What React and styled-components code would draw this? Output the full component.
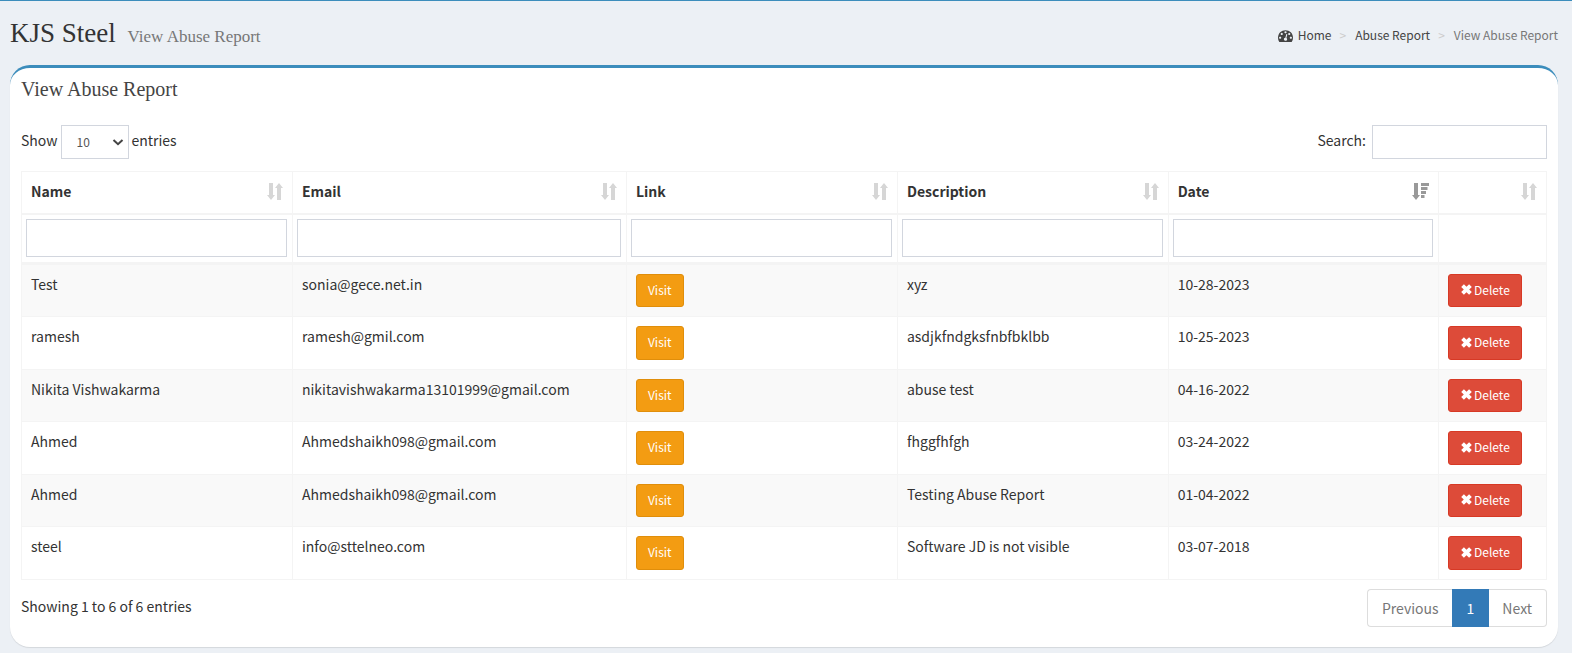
import React from "react";
import styled, { createGlobalStyle } from "styled-components";

const GlobalStyle = createGlobalStyle`
  *, *::before, *::after { box-sizing: border-box; }
  body {
    margin: 0;
    background: #ecf0f5;
    color: #333;
    font: 14px/20px "Source Sans Pro", "Noto Sans CJK SC", sans-serif;
  }
  input, select, button { font: inherit; color: inherit; }
`;

const Page = styled.div`
  border-top: 1px solid #3c8dbc;
  padding-bottom: 6px;
`;

const PageHeader = styled.header`
  display: flex;
  justify-content: space-between;
  align-items: flex-start;
  height: 64px;
  padding: 16px 14px 0 10px;
`;

const PageTitle = styled.h1`
  margin: 0;
  font: 27px/32px "Liberation Serif", serif;
`;

const Subtitle = styled.small`
  padding-left: 5px;
  font-size: 17px;
  color: #777;
`;

const Breadcrumb = styled.ol`
  display: flex;
  margin: 0;
  padding: 8px 0 0;
  list-style: none;
  font-size: 12px;
  line-height: 20px;
`;

const Crumb = styled.li`
  color: #777;
  & + &::before {
    content: ">";
    padding: 0 9px 0 8px;
    color: #ccc;
  }
`;

const CrumbLink = styled.a`
  display: inline-flex;
  align-items: center;
  gap: 5px;
  color: #444;
  text-decoration: none;
`;

const Card = styled.main`
  margin: 0 14px 0 10px;
  padding: 10px 11px 20px;
  border-top: 3px solid #3c8dbc;
  border-radius: 20px;
  background: #fff;
  box-shadow: 0 1px 1px rgba(0, 0, 0, 0.1);
`;

const CardTitle = styled.h2`
  margin: 0 0 25px;
  font: 20px/22px "Liberation Serif", serif;
  color: #444;
`;

const Toolbar = styled.div`
  display: flex;
  justify-content: space-between;
  margin-bottom: 12px;
`;

const Control = styled.label`
  display: flex;
  align-items: flex-start;
  gap: ${(p) => p.$gap}px;
  line-height: 30px;
`;

const SelectWrap = styled.span`
  display: grid;
  align-items: center;
  & > * { grid-area: 1 / 1; }
  & > svg { justify-self: end; margin-right: 5px; pointer-events: none; }
`;

const Select = styled.select`
  appearance: none;
  width: 68px;
  height: 34px;
  padding: 0 15px;
  border: 1px solid #d2d6de;
  border-radius: 0;
  background: #fff;
  font-size: 12px;
  color: #555;
`;

const TextInput = styled.input`
  width: ${(p) => p.$width};
  height: ${(p) => p.$height}px;
  display: block;
  padding: 0 12px;
  border: 1px solid #d2d6de;
  border-radius: 0;
  background: #fff;
`;

const Table = styled.table`
  width: 100%;
  table-layout: fixed;
  border-collapse: separate;
  border-spacing: 0;
  border-top: 1px solid #f4f4f4;
  border-left: 1px solid #f4f4f4;
`;

const Col = styled.col`
  width: ${(p) => p.$width};
`;

const HeadCell = styled.th`
  height: 43px;
  padding: 9px 9px 0;
  border-right: 1px solid #f4f4f4;
  border-bottom: 2px solid #f4f4f4;
  text-align: left;
  vertical-align: top;
`;

const HeadContent = styled.div`
  display: flex;
  justify-content: space-between;
  align-items: center;
  height: 20px;
`;

const FilterCell = styled.td`
  height: 50px;
  padding: 4px 5px 5px 4px;
  border-right: 1px solid #f4f4f4;
  border-bottom: 3px solid #f4f4f4;
  vertical-align: top;
`;

const Row = styled.tr`
  height: 52px;
  background: #f9f9f9;
  &:nth-child(even) { height: 53px; background: #fff; }
`;

const Cell = styled.td`
  padding: 9px;
  border-right: 1px solid #f4f4f4;
  border-bottom: 1px solid #f4f4f4;
  vertical-align: top;
  white-space: nowrap;
`;

const ActionButton = styled.button`
  display: flex;
  align-items: center;
  gap: 1px;
  height: 33px;
  padding: 0 11px 2px;
  border: 1px solid ${(p) => p.$edge};
  border-radius: 3px;
  background: ${(p) => p.$fill};
  color: #fff;
  font-size: 12px;
  line-height: 20px;
  ${Row}:nth-child(even) & { height: 34px; }
`;

const Footer = styled.footer`
  display: flex;
  justify-content: space-between;
  align-items: flex-start;
  padding-top: 9px;
`;

const Info = styled.p`
  margin: 0;
  padding-top: 7px;
`;

const Pagination = styled.nav`
  display: flex;
`;

const PageButton = styled.button`
  height: 38px;
  padding: 0 14px;
  border: 1px solid ${(p) => (p.$active ? "#337ab7" : "#ddd")};
  background: ${(p) => (p.$active ? "#337ab7" : "#fff")};
  color: ${(p) => (p.$active ? "#fff" : "#777")};
  &:first-child { padding-right: 13px; border-right: 0; border-radius: 4px 0 0 4px; }
  &:last-child { padding-left: 13px; border-left: 0; border-radius: 0 4px 4px 0; }
`;

const DashboardIcon = () => (
  <svg width="15" height="15" viewBox="0 0 1792 1792" fill="currentColor" aria-hidden="true">
    <path d="M384 1152q0-53-37.5-90.5t-90.5-37.5-90.5 37.5-37.5 90.5 37.5 90.5 90.5 37.5 90.5-37.5 37.5-90.5zm192-448q0-53-37.5-90.5t-90.5-37.5-90.5 37.5-37.5 90.5 37.5 90.5 90.5 37.5 90.5-37.5 37.5-90.5zm428 481l101-382q6-26-7.5-48.5t-38.5-29.5-48 6.5-30 39.5l-101 382q-60 5-107 43.5t-63 98.5q-20 77 20 146t117 89 146-20 89-117q16-60-6-117t-72-91zm660-33q0-53-37.5-90.5t-90.5-37.5-90.5 37.5-37.5 90.5 37.5 90.5 90.5 37.5 90.5-37.5 37.5-90.5zm-640-640q0-53-37.5-90.5t-90.5-37.5-90.5 37.5-37.5 90.5 37.5 90.5 90.5 37.5 90.5-37.5 37.5-90.5zm448 192q0-53-37.5-90.5t-90.5-37.5-90.5 37.5-37.5 90.5 37.5 90.5 90.5 37.5 90.5-37.5 37.5-90.5zm320 448q0 261-141 483-19 29-54 29h-1402q-35 0-54-29-141-221-141-483 0-182 71-348t191-286 286-191 348-71 348 71 286 191 191 286 71 348z" />
  </svg>
);

const RemoveIcon = () => (
  <svg width="13" height="13" viewBox="0 0 13 13" fill="currentColor" aria-hidden="true">
    <path d="M3.9 1.2 6.5 3.8 9.1 1.2 11.8 3.9 9.2 6.5 11.8 9.1 9.1 11.8 6.5 9.2 3.9 11.8 1.2 9.1 3.8 6.5 1.2 3.9z" />
  </svg>
);

const ChevronIcon = () => (
  <svg width="12" height="12" viewBox="0 0 12 12" fill="none" stroke="#444" strokeWidth="2" aria-hidden="true">
    <path d="M1.5 4 6 8.2 10.5 4" />
  </svg>
);

const SortIcon = () => (
  <svg width="16" height="17" viewBox="0 0 16 17" fill="#d6d6d6" aria-hidden="true">
    <path d="M2 0h4v12h2L4 17 0 12h2z" />
    <path d="M10 17h4V5h2L12 0 8 5h2z" />
  </svg>
);

const SortDescIcon = () => (
  <svg width="17" height="17" viewBox="0 0 17 17" fill="#999" aria-hidden="true">
    <path d="M2 0h4v12h2L4 17 0 12h2z" />
    <path d="M9 0h8v3H9zM9 4h6.5v3H9zM9 8h5v3H9zM9 12h3.5v3H9z" />
  </svg>
);

const columns = [
  { label: "Name", width: "17.77%" },
  { label: "Email", width: "21.9%" },
  { label: "Link", width: "17.77%" },
  { label: "Description", width: "17.75%" },
  { label: "Date", width: "17.73%", sorted: true },
  { label: "", width: "7.08%" },
];

const reports = [
  ["Test", "sonia@gece.net.in", "xyz", "10-28-2023"],
  ["ramesh", "ramesh@gmil.com", "asdjkfndgksfnbfbklbb", "10-25-2023"],
  ["Nikita Vishwakarma", "nikitavishwakarma13101999@gmail.com", "abuse test", "04-16-2022"],
  ["Ahmed", "Ahmedshaikh098@gmail.com", "fhggfhfgh", "03-24-2022"],
  ["Ahmed", "Ahmedshaikh098@gmail.com", "Testing Abuse Report", "01-04-2022"],
  ["steel", "info@sttelneo.com", "Software JD is not visible", "03-07-2018"],
];

export default function App() {
  return (
    <Page>
      <GlobalStyle />
      <PageHeader>
        <PageTitle>
          KJS Steel <Subtitle>View Abuse Report</Subtitle>
        </PageTitle>
        <Breadcrumb>
          <Crumb><CrumbLink href="#home"><DashboardIcon />Home</CrumbLink></Crumb>
          <Crumb><CrumbLink href="#abuse-report">Abuse Report</CrumbLink></Crumb>
          <Crumb>View Abuse Report</Crumb>
        </Breadcrumb>
      </PageHeader>
      <Card>
        <CardTitle>View Abuse Report</CardTitle>
        <Toolbar>
          <Control $gap={3}>
            Show
            <SelectWrap>
              <Select defaultValue="10">
                <option>10</option>
                <option>25</option>
                <option>50</option>
                <option>100</option>
              </Select>
              <ChevronIcon />
            </SelectWrap>
            entries
          </Control>
          <Control $gap={6}>
            Search:
            <TextInput type="search" $width="175px" $height={34} />
          </Control>
        </Toolbar>
        <Table>
          <colgroup>
            {columns.map((c) => <Col key={c.label} $width={c.width} />)}
          </colgroup>
          <thead>
            <tr>
              {columns.map((c) => (
                <HeadCell key={c.label} scope="col">
                  <HeadContent>
                    <span>{c.label}</span>
                    {c.sorted ? <SortDescIcon /> : <SortIcon />}
                  </HeadContent>
                </HeadCell>
              ))}
            </tr>
            <tr>
              {columns.map((c) => (
                <FilterCell key={c.label}>
                  {c.label && (
                    <TextInput type="text" aria-label={c.label} $width="100%" $height={38} />
                  )}
                </FilterCell>
              ))}
            </tr>
          </thead>
          <tbody>
            {reports.map(([name, email, description, date]) => (
              <Row key={date}>
                <Cell>{name}</Cell>
                <Cell>{email}</Cell>
                <Cell>
                  <ActionButton type="button" $fill="#f39c12" $edge="#e08e0b">Visit</ActionButton>
                </Cell>
                <Cell>{description}</Cell>
                <Cell>{date}</Cell>
                <Cell>
                  <ActionButton type="button" $fill="#dd4b39" $edge="#d73925">
                    <RemoveIcon />Delete
                  </ActionButton>
                </Cell>
              </Row>
            ))}
          </tbody>
        </Table>
        <Footer>
          <Info>Showing 1 to 6 of 6 entries</Info>
          <Pagination aria-label="Pages">
            <PageButton type="button">Previous</PageButton>
            <PageButton type="button" $active aria-current="page">1</PageButton>
            <PageButton type="button">Next</PageButton>
          </Pagination>
        </Footer>
      </Card>
    </Page>
  );
}
